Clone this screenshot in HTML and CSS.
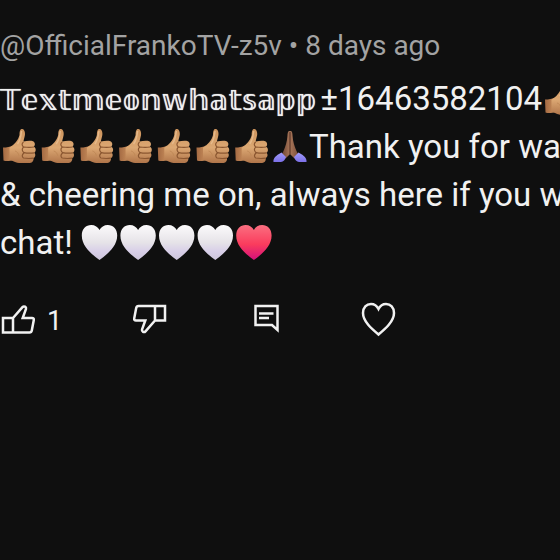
FILE: index.html
```
<!DOCTYPE html>
<html lang="en">
<head>
<meta charset="utf-8">
<meta name="viewport" content="width=device-width, initial-scale=1">
<title>Comment</title>
<link rel="stylesheet" href="styles.css">
</head>
<body>
<svg class="defs" aria-hidden="true">
  <defs>
    <linearGradient id="skin" x1="0" y1="0" x2="0" y2="1"><stop offset="0" stop-color="#cc935c"/><stop offset=".55" stop-color="#dca873"/><stop offset="1" stop-color="#b0754a"/></linearGradient>
    <linearGradient id="wrist" x1="0" y1="0" x2="1" y2="0"><stop offset="0" stop-color="#a46a43"/><stop offset="1" stop-color="#cd935f"/></linearGradient>
    <linearGradient id="arm" x1="0" y1="0" x2="1" y2="0"><stop offset="0" stop-color="#6b4231"/><stop offset=".5" stop-color="#a8775a"/><stop offset="1" stop-color="#7b4d38"/></linearGradient>
    <linearGradient id="sleeve" x1="0" y1="0" x2="0" y2="1"><stop offset="0" stop-color="#a09cfb"/><stop offset="1" stop-color="#7c70e8"/></linearGradient>
    <linearGradient id="white" x1="0" y1="0" x2="0" y2="1"><stop offset="0" stop-color="#fbfafb"/><stop offset=".5" stop-color="#e6e3e8"/><stop offset=".75" stop-color="#d8cfe8"/><stop offset="1" stop-color="#cdc5dc"/></linearGradient>
    <linearGradient id="red" x1="0" y1="0" x2="0" y2="1"><stop offset="0" stop-color="#fa6f80"/><stop offset=".55" stop-color="#fa3c5d"/><stop offset="1" stop-color="#d4107c"/></linearGradient>
    <g id="thumb">
      <path d="M3 20.500C7 20.500 10 20 12.500 18.500L14 33C10 34 6 34.500 3.500 33.500Z" fill="url(#wrist)"/>
      <path d="M9.500 20.500C14 18 18.500 13 19.500 8C19.500 3.500 20.500 1.800 22.300 2C25 2.400 25.600 7 24.500 10C24 12.500 23.500 13.500 23.500 14.500C27 13.800 31 13.500 33 14.300C35.500 15.500 35.300 18.500 33.800 19.800C36.300 21 36.200 24.500 34.400 25.700C36 27.500 35.400 30.200 33.500 31C34 33.500 32.500 35.600 30 36L19 36C14 35.500 12 33 9.500 32.500Z" fill="url(#skin)"/>
      <path d="M34 20C30 20.700 27 20.500 24 20M34.500 25.800C30 26.500 27 26.300 24 25.700M33.500 31.200C29 31.700 26 31.500 23.500 31M23.500 15C21.500 16.500 21.800 18.500 23.500 20C21.500 22 22 24 24 25.700C21.500 28 22 30 23.500 31" fill="none" stroke="#8a5630" stroke-width="1.200"/>
      <path d="M15 24C17 24.500 18.500 26 19 29" fill="none" stroke="#c18a58" stroke-width="1"/>
      <path d="M21.500 4C21 8 20.500 13 17.500 17" fill="none" stroke="#e5b98a" stroke-width="1.500"/>
    </g>
    <path id="heart" d="M18.500 37C11 31.500 .8 23.500 .8 12.500C.8 6 5 2 10.200 2C14 2 17 4 18.500 7C20 4 23 2 26.800 2C32 2 36.200 6 36.200 12.500C36.200 23.500 26 31.500 18.500 37Z"/>
  </defs>
</svg>
<article class="comment">
  <header class="meta">@OfficialFrankoTV-z5v • 8 days ago</header>
  <p class="body">
    <span class="line"><span class="fancy">𝕋𝕖𝕩𝕥𝕞𝕖𝕠𝕟𝕨𝕙𝕒𝕥𝕤𝕒𝕡𝕡</span>±16463582104<svg class="emoji" width="39" height="40" viewBox="0 0 39 40" role="img" aria-label="thumbs up"><use href="#thumb"/></svg></span>
    <span class="line"><svg class="emoji" width="309" height="40" viewBox="0 0 309 40" role="img" aria-label="seven thumbs up and folded hands">
      <use href="#thumb"/><use href="#thumb" x="38.700"/><use href="#thumb" x="77.400"/><use href="#thumb" x="116.100"/><use href="#thumb" x="154.800"/><use href="#thumb" x="193.500"/><use href="#thumb" x="232.200"/>
      <g transform="translate(271 0)">
        <path d="M18.500 4C16.800 4 16.600 6 16.400 9C16 15 14.500 19 12.500 24L10.500 28L14.500 31.500L19 27L23.500 31.500L27.500 28L25.500 24C23.500 19 22 15 21.600 9C21.400 6 21.200 4 19.500 4Z" fill="url(#arm)"/>
        <path d="M19 5V27" stroke="#5a3527" stroke-width="1.200"/>
        <path d="M10.500 25.500L15 30C14 33 12.500 34.800 10 35H2.500C2 31.500 4.500 28.500 10.500 25.500ZM27.500 25.500L23 30C24 33 25.500 34.800 28 35H35.500C36 31.500 33.500 28.500 27.500 25.500Z" fill="url(#sleeve)"/>
      </g>
    </svg>Thank you for wa</span>
    <span class="line">&amp; cheering me on, always here if you w</span>
    <span class="line">chat! <svg class="emoji" width="193" height="40" viewBox="0 0 193 40" role="img" aria-label="four white hearts and a red heart">
      <g fill="url(#white)"><use href="#heart"/><use href="#heart" x="38.600"/><use href="#heart" x="77.200"/><use href="#heart" x="115.800"/></g><use href="#heart" x="154.400" fill="url(#red)"/>
    </svg></span>
  </p>
  <footer class="actions">
    <button class="action like" type="button" aria-label="Like, 1"><svg width="36" height="36" viewBox="0 0 36 36"><path d="M3 17H13V31.500H3ZM13 17L22.500 6.200C24 4.500 26.500 6 26 8L22.700 17H32C33.500 17 34 18 33.800 19L31.800 29.500C31.500 31 30.800 31.500 29.500 31.500H13"/></svg><span>1</span></button>
    <button class="action dislike" type="button" aria-label="Dislike"><svg width="36" height="36" viewBox="0 0 36 36"><path d="M34 5H24V19.500H34ZM24 19.500L14.500 30.300C13 32 10.500 30.500 11 28.500L14.300 19.500H5C3.500 19.500 3 18.500 3.200 17.500L5.200 7C5.500 5.500 6.200 5 7.500 5H24"/></svg></button>
    <button class="action reply" type="button" aria-label="Reply"><svg width="36" height="36" viewBox="0 0 36 36"><path d="M7.500 5H29.500V29L24 24H7.500ZM11 12.500H25.500M11 17H21"/></svg></button>
    <button class="action" type="button" aria-label="Heart"><svg width="36" height="36" viewBox="0 0 36 36"><path d="M18.500 33.500C12 28 3 20.500 3 12C3 6.500 6.500 3 11 3C14.500 3 17 5 18.500 8C20 5 22.500 3 26 3C30.500 3 34 6.500 34 12C34 20.500 25 28 18.500 33.500Z"/></svg></button>
  </footer>
</article>
</body>
</html>
```
FILE: styles.css
```
body {
  margin: 0;
  background: #0f0f0f;
  color: #f1f1f1;
  font-family: Roboto, "DejaVu Sans", sans-serif;
}

.defs {
  position: absolute;
  width: 0;
  height: 0;
}

.comment {
  padding-top: 28px;
  overflow: hidden;
}

.meta {
  color: #a3a3a3;
  font-size: 28px;
  line-height: 36px;
  white-space: nowrap;
}

.body {
  margin: 11px 0 0;
  font-size: 33px;
  line-height: 48px;
}

.line {
  display: block;
  height: 48px;
  white-space: nowrap;
}

.fancy {
  padding-right: 3px;
  font-family: "DejaVu Sans", sans-serif;
  font-size: 29px;
  line-height: 1;
  text-shadow: 0 0 1px #f1f1f1;
}

.emoji {
  vertical-align: -9px;
}

.actions {
  display: flex;
  align-items: center;
  margin-top: 32px;
}

.action {
  display: flex;
  align-items: center;
  gap: 11px;
  padding: 0;
  border: 0;
  background: none;
  color: inherit;
  font: 27px/36px Roboto, sans-serif;
}

.action span {
  padding-top: 4px;
}

.action svg {
  fill: none;
  stroke: #f1f1f1;
  stroke-width: 2.5;
}

.like {
  margin-right: 69px;
}

.dislike {
  margin-right: 81px;
}

.reply {
  margin-right: 76px;
}
```
